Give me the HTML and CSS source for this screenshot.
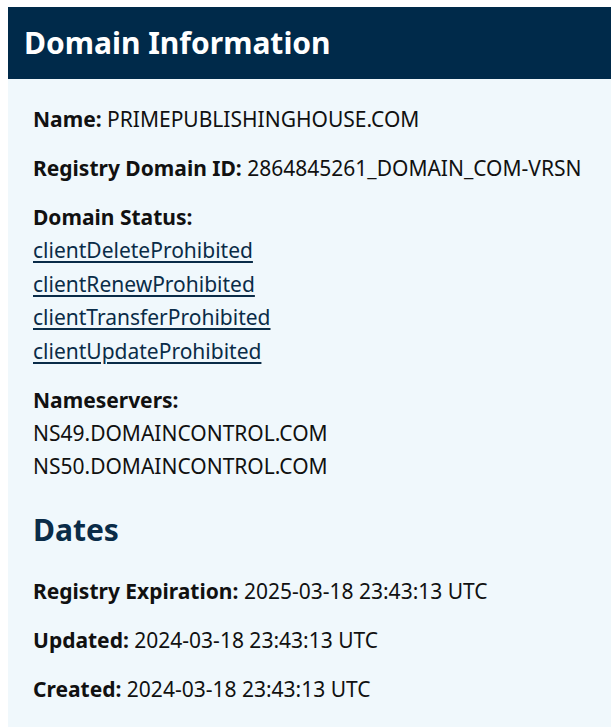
FILE: index.html
```html
<!DOCTYPE html>
<html lang="en">
<head>
<meta charset="utf-8">
<title>Domain Information</title>
<link rel="stylesheet" href="styles.css">
</head>
<body>
<section class="card">
  <header class="card-head">
    <h2 class="card-title">Domain Information</h2>
  </header>
  <div class="card-body">
    <p class="row"><strong>Name:</strong> PRIMEPUBLISHINGHOUSE.COM</p>
    <p class="row"><strong>Registry Domain ID:</strong> 2864845261_DOMAIN_COM-VRSN</p>
    <div class="row">
      <strong>Domain Status:</strong>
      <a class="status" href="#">clientDeleteProhibited</a>
      <a class="status" href="#">clientRenewProhibited</a>
      <a class="status" href="#">clientTransferProhibited</a>
      <a class="status" href="#">clientUpdateProhibited</a>
    </div>
    <div class="row">
      <strong>Nameservers:</strong>
      <span class="ns">NS49.DOMAINCONTROL.COM</span>
      <span class="ns">NS50.DOMAINCONTROL.COM</span>
    </div>
    <h3 class="section-title">Dates</h3>
    <p class="row"><strong>Registry Expiration:</strong> 2025-03-18 23:43:13 UTC</p>
    <p class="row"><strong>Updated:</strong> 2024-03-18 23:43:13 UTC</p>
    <p class="row"><strong>Created:</strong> 2024-03-18 23:43:13 UTC</p>
  </div>
</section>
</body>
</html>
```
FILE: styles.css
```css
html, body {
  overflow: hidden;
}
body {
  margin: 7px 0 0 8px;
  background: #ffffff;
  font-family: "Noto Sans", "Open Sans", sans-serif;
  color: #111111;
}
.card {
  width: 640px;
  background: #f0f8fc;
  box-shadow: 0 0 3px rgba(0, 0, 0, 0.15);
}
.card-head {
  background: #002a4a;
  height: 72px;
  display: flex;
  align-items: center;
  padding: 0 16px;
}
.card-title {
  margin: 0;
  color: #ffffff;
  font-size: 30px;
  font-weight: 700;
  line-height: 1;
}
.card-body {
  padding: 24px 25px 20px;
  font-size: 21px;
  line-height: 33.4px;
}
.row {
  margin: 0 0 15.6px;
}
.row strong {
  font-weight: 700;
  display: inline;
}
div.row strong,
.status,
.ns {
  display: block;
}
.status {
  color: #0a2c48;
  text-decoration: underline;
  text-underline-offset: 3px;
  width: max-content;
}
.section-title {
  margin: 28px 0 27px;
  font-size: 30px;
  font-weight: 700;
  color: #0a2c48;
  line-height: 36px;
}
```
